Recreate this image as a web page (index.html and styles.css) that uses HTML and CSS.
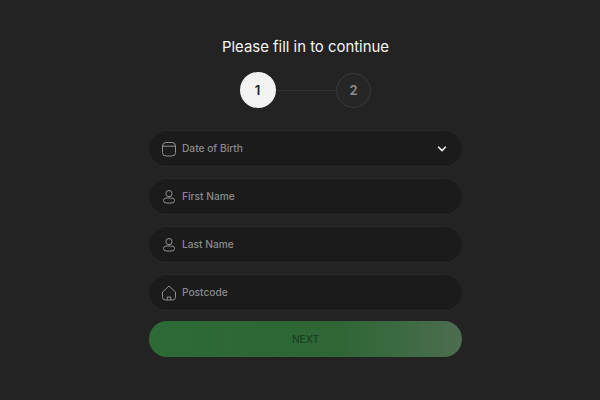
FILE: index.html
```html
<!DOCTYPE html>
<html lang="en">
<head>
    <meta charset="UTF-8">
    <meta name="viewport" content="width=device-width, initial-scale=1.0">
    <title>Please fill in to continue</title>
    <link rel="stylesheet" href="styles.css">
</head>
<body>
    <div class="form-wrap">
        <h2>Please fill in to continue</h2>
        <div class="steps">
            <div class="step active">1</div>
            <div class="step-line"></div>
            <div class="step">2</div>
        </div>
        <div class="field">
            <svg class="icon" viewBox="0 0 16 16"><rect x="1.500" y="1.500" width="13" height="13.500" rx="3.500"/><path d="M1.500 5.200h13"/></svg>
            <span class="label">Date of Birth</span>
            <svg class="chevron" viewBox="0 0 10 8"><path d="M1.200 1.800L5 5.600l3.800-3.800"/></svg>
        </div>
        <div class="field">
            <svg class="icon" viewBox="0 0 16 16"><circle cx="8" cy="4.600" r="3.100"/><rect x="2.500" y="9" width="11" height="5" rx="2.500"/></svg>
            <span class="label">First Name</span>
        </div>
        <div class="field">
            <svg class="icon" viewBox="0 0 16 16"><circle cx="8" cy="4.600" r="3.100"/><rect x="2.500" y="9" width="11" height="5" rx="2.500"/></svg>
            <span class="label">Last Name</span>
        </div>
        <div class="field">
            <svg class="icon" viewBox="0 0 16 16"><path d="M1.500 7L8 1l6.500 6v5.200a2.800 2.800 0 0 1-2.800 2.800H4.300a2.800 2.800 0 0 1-2.800-2.800z"/><path d="M6.200 15v-3h3.600v3"/></svg>
            <span class="label">Postcode</span>
        </div>
        <button class="next">NEXT</button>
    </div>
</body>
</html>
```

FILE: styles.css
```css
body {
    margin: 0;
    height: 400px;
    background-color: #232324;
    font-family: 'Inter', 'Liberation Sans', sans-serif;
    overflow: hidden;
}
.form-wrap {
    width: 313px;
    margin-left: 149px;
    padding-top: 38px;
    display: flex;
    flex-direction: column;
    align-items: stretch;
}
h2 {
    margin: 0 0 16px;
    color: #f5f5f5;
    font-size: 14.900px;
    line-height: 18px;
    font-weight: 400;
    text-align: center;
}
.steps {
    display: flex;
    justify-content: center;
    align-items: center;
    margin-bottom: 23px;
}
.step {
    width: 33px;
    height: 33px;
    border: 1px solid #3a3a3b;
    border-radius: 50%;
    display: flex;
    justify-content: center;
    align-items: center;
    background-color: #262627;
    color: #8e8e8e;
    font-size: 13px;
    font-weight: 600;
}
.step.active {
    width: 35px;
    height: 36px;
    padding-right: 1px;
    border: none;
    background-color: #f3f3f3;
    color: #222;
}
.step-line {
    width: 60px;
    height: 1px;
    background-color: #323233;
}
.field {
    height: 35px;
    margin-bottom: 13px;
    padding: 0 15px 0 12px;
    background-color: #1b1b1c;
    border-radius: 18px;
    box-shadow: 0 -1px 0 #2a2a2b, 0 1px 0 #2a2a2b;
    display: flex;
    align-items: center;
}
.icon {
    width: 16px;
    height: 16px;
    margin-right: 5px;
    fill: none;
    stroke: #8f8f8f;
    stroke-width: 1;
}
.label {
    flex: 1;
    margin-bottom: 2px;
    color: #8a8a8a;
    font-size: 10.200px;
    font-weight: 500;
}
.chevron {
    width: 10px;
    height: 8px;
    fill: none;
    stroke: #f0f0f0;
    stroke-width: 1.600;
}
.next {
    height: 36px;
    margin-top: -2px;
    border: none;
    border-radius: 18px;
    background-image: linear-gradient(90deg, #2c6a36 0%, #2f6636 60%, #3c6a41 80%, #4d6d50 100%);
    color: #1a4023;
    font-family: inherit;
    font-size: 10.200px;
    font-weight: 500;
}
```
